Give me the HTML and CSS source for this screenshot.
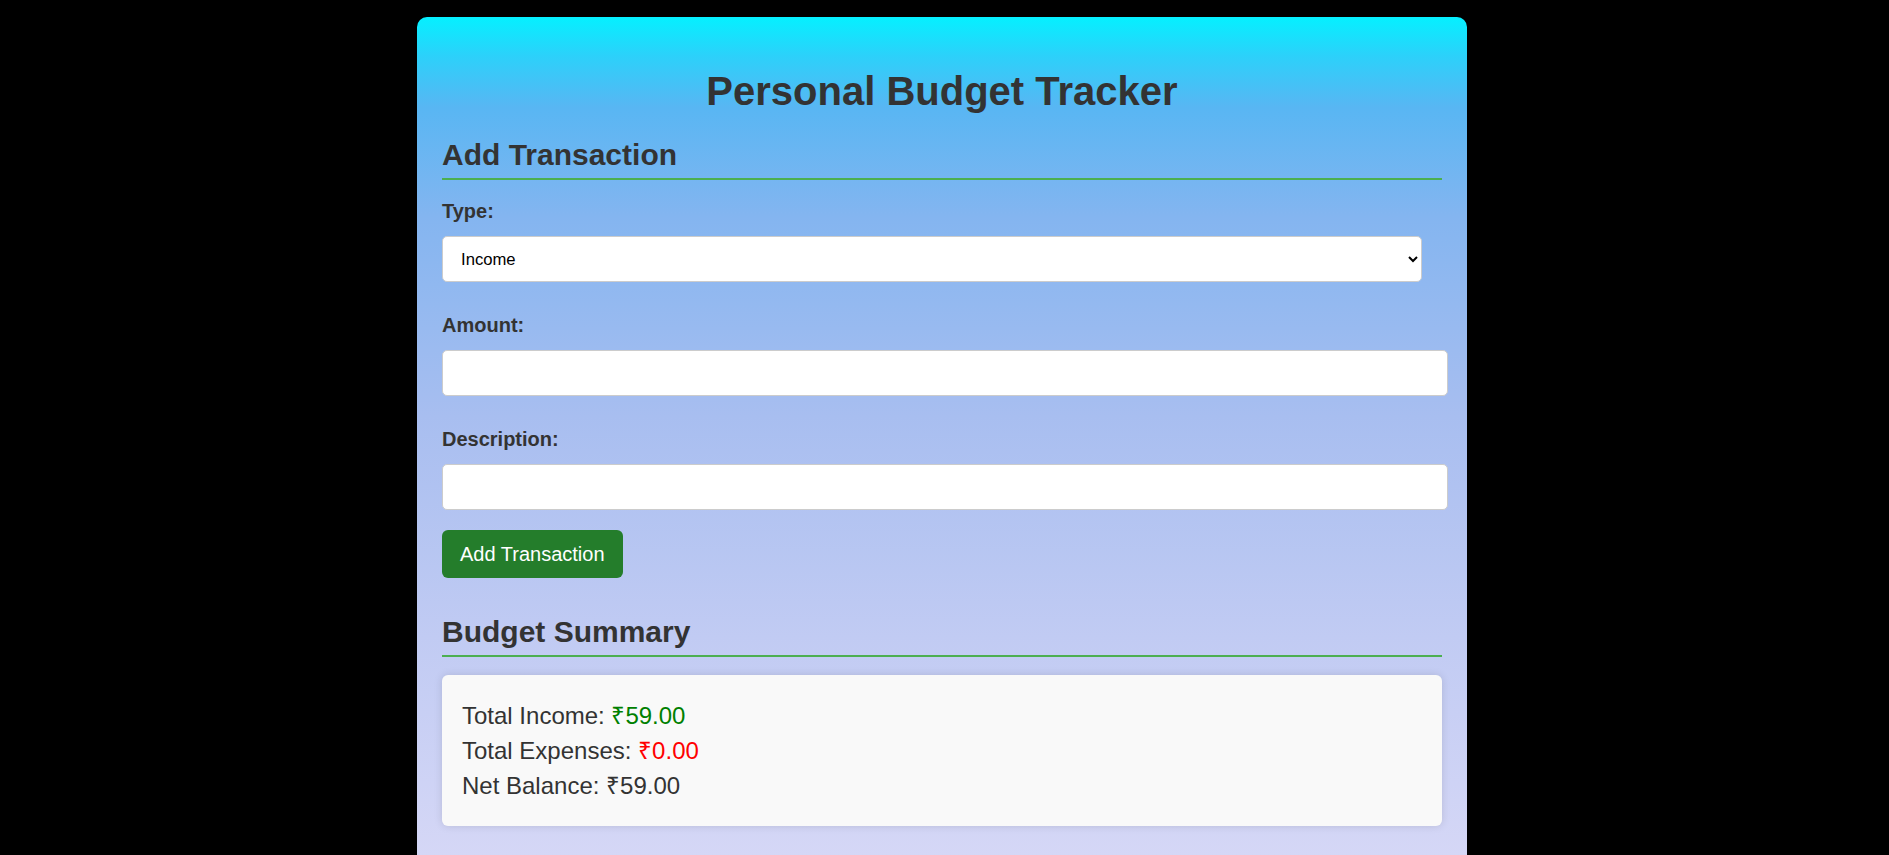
FILE: index.html
```html
<!DOCTYPE html>
<html lang="en">
<head>
<meta charset="utf-8">
<title>Personal Budget Tracker</title>
<link rel="stylesheet" href="styles.css">
</head>
<body>
<div class="container">
  <h1 class="title">Personal Budget Tracker</h1>

  <h2 class="section-title">Add Transaction</h2>
  <form class="tx-form">
    <div class="field">
      <label class="field-label" for="type">Type:</label>
      <select class="field-select" id="type">
        <option>Income</option>
        <option>Expense</option>
      </select>
    </div>
    <div class="field">
      <label class="field-label" for="amount">Amount:</label>
      <input class="field-input" id="amount" type="number">
    </div>
    <div class="field field-last">
      <label class="field-label" for="desc">Description:</label>
      <input class="field-input" id="desc" type="text">
    </div>
    <button class="btn" type="button">Add Transaction</button>
  </form>

  <h2 class="section-title section-gap">Budget Summary</h2>
  <div class="summary">
    <p class="summary-line">Total Income: <span class="income">₹59.00</span></p>
    <p class="summary-line">Total Expenses: <span class="expense">₹0.00</span></p>
    <p class="summary-line">Net Balance: <span class="net">₹59.00</span></p>
  </div>
</div>
</body>
</html>
```

FILE: styles.css
```css
html, body {
  background: #000;
}

body {
  margin: 0;
  padding: 17px 5px 0 0;
  font-family: "Liberation Sans", Arial, sans-serif;
  color: #333;
}

.container {
  width: 1000px;
  margin: 0 auto;
  padding: 25px 25px 80px;
  border-radius: 10px 10px 0 0;
  background: linear-gradient(to bottom,
    rgb(5, 240, 255) 0px,
    rgb(45, 208, 250) 40px,
    rgb(88, 182, 243) 90px,
    rgb(132, 181, 240) 200px,
    rgb(168, 190, 240) 400px,
    rgb(193, 203, 243) 620px,
    rgb(213, 215, 246) 840px,
    rgb(225, 225, 248) 1000px);
}

.title {
  margin: 27px 0 24px;
  font-size: 40px;
  font-weight: bold;
  text-align: center;
  color: #333;
}

.section-title {
  margin: 0 0 20px;
  padding-bottom: 6px;
  border-bottom: 2px solid #4caf50;
  font-size: 30px;
  font-weight: bold;
  color: #333;
}

.section-gap {
  margin-top: 37px;
  margin-bottom: 18px;
}

.tx-form {
  margin: 0;
}

.field {
  margin-bottom: 32px;
}

.field-last {
  margin-bottom: 20px;
}

.field-label {
  display: block;
  margin-bottom: 13px;
  font-size: 20px;
  font-weight: bold;
  line-height: 23px;
  color: #333;
}

.field-select {
  display: block;
  box-sizing: border-box;
  width: 980px;
  height: 46px;
  padding: 0 13px 0 14px;
  border: 1px solid #ccc;
  border-radius: 5px;
  background-color: #fff;
  font-family: "Liberation Sans", Arial, sans-serif;
  font-size: 16.67px;
  color: #000;
}

.field-input {
  display: block;
  box-sizing: border-box;
  width: 1006px;
  height: 46px;
  margin-top: 1px;
  padding: 0 12px;
  border: 1px solid #ccc;
  border-radius: 5px;
  background: #fff;
  font-family: "Liberation Sans", Arial, sans-serif;
  font-size: 16.67px;
  color: #000;
}

.btn {
  display: block;
  padding: 12.5px 18px;
  border: none;
  border-radius: 6px;
  background: #247d2b;
  color: #fff;
  font-family: "Liberation Sans", Arial, sans-serif;
  font-size: 20px;
  line-height: 23px;
  cursor: pointer;
}

.summary {
  padding: 23px 20px 23px;
  border-radius: 6px;
  background: #f9f9f9;
  box-shadow: 0 0 8px rgba(0, 0, 0, 0.12);
}

.summary-line {
  margin: 0;
  font-size: 24px;
  line-height: 35px;
  color: #333;
}

.income { color: #008000; }
.expense { color: #ff0000; }
.net { color: #333; }
```
